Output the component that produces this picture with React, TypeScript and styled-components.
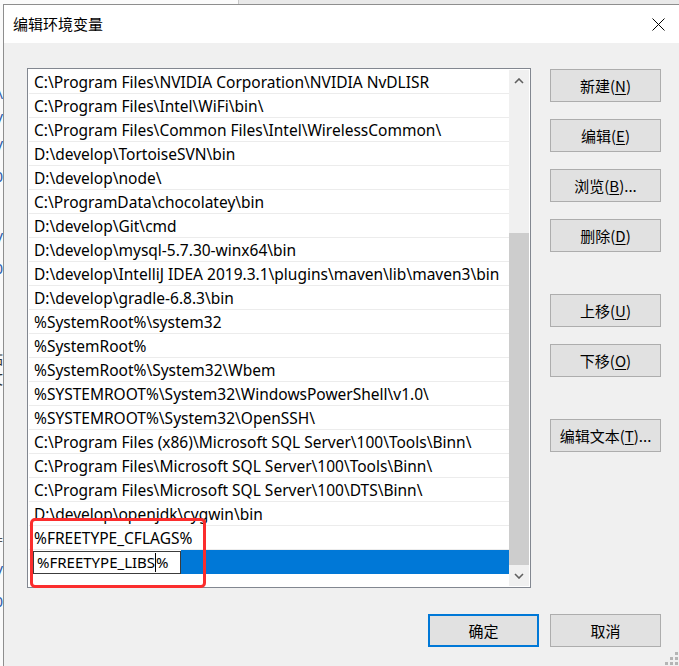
import React from "react";
import styled, { createGlobalStyle } from "styled-components";

const GlobalStyle = createGlobalStyle`
  html, body { margin: 0; padding: 0; background: #f0f0f0; }
  body { font-family: "Noto Sans", "Noto Sans CJK SC", sans-serif; }
  * { box-sizing: border-box; }
`;

const Screen = styled.div`
  position: relative;
  width: 679px;
  height: 666px;
  overflow: hidden;
  display: flex;
  flex-direction: column;
  background: #f7f7f7;
`;

const TopStrip = styled.div`
  height: 4px;
  flex: none;
  display: flex;
`;

const TopPane = styled.div<{ $w?: number; $bg: string }>`
  width: ${(p) => (p.$w ? `${p.$w}px` : "auto")};
  flex: ${(p) => (p.$w ? "none" : "1")};
  background: ${(p) => p.$bg};
  border-right: ${(p) => (p.$w ? "1px solid #c8c8c8" : "none")};
`;

const Middle = styled.div`
  flex: 1;
  display: flex;
  min-height: 0;
`;

const LeftStrip = styled.div`
  width: 3px;
  flex: none;
  background: #fafafa;
  overflow: hidden;
  display: flex;
  flex-direction: column;
  padding-top: 80px;
`;

const Fragment = styled.div<{ $h: number; $color: string }>`
  height: ${(p) => p.$h}px;
  width: 3px;
  display: flex;
  justify-content: flex-end;
  white-space: nowrap;
  font-family: "Noto Sans", "Noto Sans CJK SC", sans-serif;
  font-size: 15px;
  line-height: ${(p) => p.$h}px;
  color: ${(p) => p.$color};
`;

const Dialog = styled.div`
  flex: 1;
  display: flex;
  flex-direction: column;
  border-top: 1px solid #8e8e8e;
  border-left: 1px solid #8e8e8e;
  background: #f0f0f0;
`;

const TitleBar = styled.div`
  height: 38px;
  flex: none;
  background: #ffffff;
  display: flex;
  align-items: center;
  padding-left: 9px;
`;

const Title = styled.div`
  font-family: "Noto Sans CJK SC", sans-serif;
  font-size: 15px;
  color: #000;
  line-height: 20px;
`;

const CloseButton = styled.div`
  margin-left: auto;
  width: 42px;
  height: 38px;
  display: flex;
  align-items: center;
  justify-content: center;
`;

const Body = styled.div`
  flex: 1;
  display: flex;
  flex-direction: column;
  padding: 25px 18px 0 23px;
`;

const MainRow = styled.div`
  display: flex;
  gap: 19px;
`;

const ListBox = styled.div`
  width: 504px;
  height: 520px;
  border: 1px solid #828790;
  padding: 1px;
  background: #ffffff;
  display: flex;
`;

const Rows = styled.div`
  width: 480px;
  display: flex;
  flex-direction: column;
`;

const Row = styled.div`
  height: 24px;
  flex: none;
  border-bottom: 1px solid #ececec;
  padding-left: 5px;
  font-family: "Noto Sans", "Noto Sans CJK SC", sans-serif;
  font-size: 15.5px;
  line-height: 25px;
  color: #000;
  white-space: nowrap;
  overflow: hidden;
`;

const SelectedRow = styled.div`
  height: 24px;
  flex: none;
  display: flex;
  background: #0078d7;
`;

const EditCell = styled.div`
  width: 152px;
  flex: none;
  background: #ffffff;
  padding: 1px 0 0 4px;
`;

const EditBox = styled.div`
  width: 148px;
  height: 23px;
  border: 1px solid #3c3c3c;
  background: #ffffff;
  padding-left: 3px;
  font-family: "Noto Sans", "Noto Sans CJK SC", sans-serif;
  font-size: 15px;
  line-height: 21px;
  color: #000;
  white-space: nowrap;
  display: flex;
  align-items: center;
`;

const Caret = styled.span`
  display: inline-block;
  width: 1px;
  height: 19px;
  background: #000;
`;

const ScrollBar = styled.div`
  width: 20px;
  display: flex;
  flex-direction: column;
  background: #f0f0f0;
`;

const ArrowButton = styled.div`
  height: 21px;
  flex: none;
  display: flex;
  align-items: center;
  justify-content: center;
`;

const Track = styled.div<{ $h: number }>`
  height: ${(p) => p.$h}px;
  flex: none;
`;

const Thumb = styled.div`
  height: 332px;
  flex: none;
  background: #cdcdcd;
`;

const ButtonColumn = styled.div`
  display: flex;
  flex-direction: column;
  padding-top: 1px;
`;

const Button = styled.div<{ $space?: number; $primary?: boolean }>`
  width: 111px;
  height: 33px;
  margin-top: ${(p) => (p.$space ?? 0)}px;
  background: #e1e1e1;
  border: ${(p) => (p.$primary ? "2px solid #0078d7" : "1px solid #adadad")};
  display: flex;
  align-items: center;
  justify-content: center;
  font-family: "Noto Sans CJK SC", sans-serif;
  font-size: 15px;
  color: #000;
  white-space: nowrap;
`;

const Key = styled.span`
  text-decoration: underline;
  text-underline-offset: 2px;
  text-decoration-thickness: 1px;
`;

const BottomRow = styled.div`
  display: flex;
  justify-content: flex-end;
  gap: 11px;
  margin-top: 26px;
`;

const Highlight = styled.div`
  position: absolute;
  left: 30px;
  top: 518px;
  width: 176px;
  height: 70px;
  border: 3px solid #fb2d2d;
  border-radius: 5px;
  pointer-events: none;
`;

const Grip = styled.svg`
  position: absolute;
  right: 1px;
  bottom: 1px;
`;

const paths = [
  "C:\\Program Files\\NVIDIA Corporation\\NVIDIA NvDLISR",
  "C:\\Program Files\\Intel\\WiFi\\bin\\",
  "C:\\Program Files\\Common Files\\Intel\\WirelessCommon\\",
  "D:\\develop\\TortoiseSVN\\bin",
  "D:\\develop\\node\\",
  "C:\\ProgramData\\chocolatey\\bin",
  "D:\\develop\\Git\\cmd",
  "D:\\develop\\mysql-5.7.30-winx64\\bin",
  "D:\\develop\\IntelliJ IDEA 2019.3.1\\plugins\\maven\\lib\\maven3\\bin",
  "D:\\develop\\gradle-6.8.3\\bin",
  "%SystemRoot%\\system32",
  "%SystemRoot%",
  "%SystemRoot%\\System32\\Wbem",
  "%SYSTEMROOT%\\System32\\WindowsPowerShell\\v1.0\\",
  "%SYSTEMROOT%\\System32\\OpenSSH\\",
  "C:\\Program Files (x86)\\Microsoft SQL Server\\100\\Tools\\Binn\\",
  "C:\\Program Files\\Microsoft SQL Server\\100\\Tools\\Binn\\",
  "C:\\Program Files\\Microsoft SQL Server\\100\\DTS\\Binn\\",
  "D:\\develop\\openjdk\\cygwin\\bin",
  "%FREETYPE_CFLAGS%",
];

const fragments: { h: number; t: string; c: string }[] = [
  { h: 18, t: "\\", c: "#2a5caa" },
  { h: 32, t: "V", c: "#2a5caa" },
  { h: 22, t: "V", c: "#2a5caa" },
  { h: 40, t: "0", c: "#2a5caa" },
  { h: 30, t: "", c: "#2a5caa" },
  { h: 22, t: "V", c: "#2a5caa" },
  { h: 40, t: "0", c: "#2a5caa" },
  { h: 60, t: "", c: "#2a5caa" },
  { h: 20, t: "钻", c: "#333" },
  { h: 20, t: "文", c: "#333" },
  { h: 140, t: "", c: "#333" },
  { h: 22, t: "=", c: "#555" },
  { h: 40, t: "V", c: "#2a5caa" },
  { h: 22, t: "0", c: "#2a5caa" },
];

const Chevron = ({ up }: { up: boolean }) => (
  <svg width="10" height="6" viewBox="0 0 10 6">
    <polyline
      points={up ? "1,5 5,1 9,5" : "1,1 5,5 9,1"}
      fill="none"
      stroke="#606060"
      strokeWidth="1.6"
    />
  </svg>
);

export default function App() {
  return (
    <>
      <GlobalStyle />
      <Screen>
        <TopStrip>
          <TopPane $w={239} $bg="#fbfbfb" />
          <TopPane $bg="#e9e9e9" />
        </TopStrip>
        <Middle>
          <LeftStrip>
            {fragments.map((f, i) => (
              <Fragment key={i} $h={f.h} $color={f.c}>
                {f.t}
              </Fragment>
            ))}
          </LeftStrip>
          <Dialog>
            <TitleBar>
              <Title>编辑环境变量</Title>
              <CloseButton>
                <svg width="13" height="13" viewBox="0 0 13 13">
                  <path d="M0.5 0.5 L12.5 12.5 M12.5 0.5 L0.5 12.5" stroke="#000" strokeWidth="1" fill="none" />
                </svg>
              </CloseButton>
            </TitleBar>
            <Body>
              <MainRow>
                <ListBox>
                  <Rows>
                    {paths.map((p, i) => (
                      <Row key={i}>{p}</Row>
                    ))}
                    <SelectedRow>
                      <EditCell>
                        <EditBox>
                          %FREETYPE_LIBS
                          <Caret />%
                        </EditBox>
                      </EditCell>
                    </SelectedRow>
                  </Rows>
                  <ScrollBar>
                    <ArrowButton>
                      <Chevron up />
                    </ArrowButton>
                    <Track $h={142} />
                    <Thumb />
                    <ArrowButton>
                      <Chevron up={false} />
                    </ArrowButton>
                  </ScrollBar>
                </ListBox>
                <ButtonColumn>
                  <Button>
                    新建(<Key>N</Key>)
                  </Button>
                  <Button $space={17}>
                    编辑(<Key>E</Key>)
                  </Button>
                  <Button $space={17}>
                    浏览(<Key>B</Key>)...
                  </Button>
                  <Button $space={17}>
                    删除(<Key>D</Key>)
                  </Button>
                  <Button $space={42}>
                    上移(<Key>U</Key>)
                  </Button>
                  <Button $space={17}>
                    下移(<Key>O</Key>)
                  </Button>
                  <Button $space={42}>
                    编辑文本(<Key>T</Key>)...
                  </Button>
                </ButtonColumn>
              </MainRow>
              <BottomRow>
                <Button $primary>确定</Button>
                <Button>取消</Button>
              </BottomRow>
            </Body>
          </Dialog>
        </Middle>
        <Highlight />
        <Grip width="13" height="13" viewBox="0 0 13 13">
          {[
            [10, 0],
            [5, 5],
            [10, 5],
            [0, 10],
            [5, 10],
            [10, 10],
          ].map(([x, y], i) => (
            <rect key={i} x={x} y={y} width="3" height="3" fill="#b4b4b4" />
          ))}
        </Grip>
      </Screen>
    </>
  );
}
